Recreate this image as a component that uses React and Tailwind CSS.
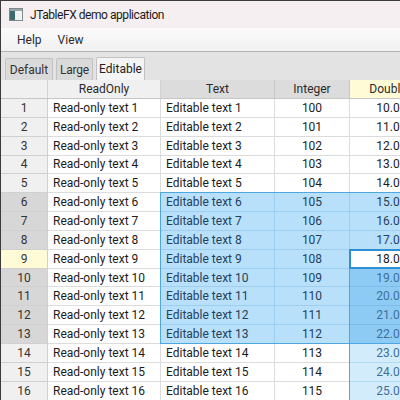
import React from "react";

const COLS = [
  { key: "ro", w: "w-[113px]" },
  { key: "tx", w: "w-[114px]" },
  { key: "in", w: "w-[75px]" },
  { key: "db", w: "w-[77px]" },
];

const rows = Array.from({ length: 16 }, (_, i) => i + 1);

function cellInfo(r, c) {
  const sel1 = r >= 6 && r <= 13 && c >= 1;
  const sel2 = r >= 10 && c === 3;
  const current = r === 9 && c === 3;
  return { sel1, sel2, current };
}

function Cell({ r, c, children, align }) {
  const { sel1, sel2, current } = cellInfo(r, c);
  let bg = "bg-white";
  let line = "border-[#dcdcdc]";
  let color = "text-[#1c1c1c]";
  if (current) {
    bg = "bg-white";
    line = "border-[#a9d5f2]";
    color = "text-[#1c1c1c]";
  } else if (sel1 && sel2) {
    bg = "bg-[#8ecbf4]";
    line = "border-[#7fbde9]";
    color = "text-[#3e6f98]";
  } else if (sel1) {
    bg = "bg-[#b8e0fa]";
    line = "border-[#9fcff0]";
    color = "text-[#23415e]";
  } else if (sel2) {
    bg = "bg-[#d3ecfc]";
    line = "border-[#b3daf3]";
    color = "text-[#3e6f98]";
  }
  const top1 = sel1 && r === 6;
  const left1 = sel1 && c === 1;
  const bottom1 = sel1 && r === 13;
  const left2 = sel2 && c === 3;
  return (
    <div
      className={`relative h-full shrink-0 border-r border-b ${line} ${bg} ${color} flex items-center ${
        align === "center" ? "justify-center" : "justify-start pl-[5px]"
      } ${COLS[c].w} whitespace-nowrap overflow-visible`}
    >
      {children}
      {(top1 || left1 || bottom1 || left2) && (
        <span
          className={`pointer-events-none absolute -top-px -left-px -right-px -bottom-px border-[#4ea7e2] ${
            top1 ? "border-t" : ""
          } ${left1 || left2 ? "border-l" : ""} ${bottom1 ? "border-b" : ""}`}
        />
      )}
      {current && (
        <span className="pointer-events-none absolute -top-px -left-px -right-[4px] -bottom-px border-2 border-[#2f8fd3]" />
      )}
    </div>
  );
}

function AppIcon() {
  return (
    <svg width="14" height="13" viewBox="0 0 14 13">
      <rect x="0.5" y="0.5" width="13" height="12" fill="#f3f3f3" stroke="#7d8a8c" />
      <rect x="1" y="3" width="5" height="9" fill="#3d6b6e" />
      <rect x="1" y="1" width="12" height="2" fill="#9aa7a8" />
    </svg>
  );
}

export default function App() {
  return (
    <div
      className="w-[400px] h-[400px] overflow-hidden bg-[#e3e3e3] border-l border-t border-[#3c3c3c] flex flex-col"
      style={{ fontFamily: 'Roboto, "Noto Sans", sans-serif' }}
    >
      {/* Title bar */}
      <div className="h-[27px] shrink-0 bg-[#f5eff1] flex items-center pl-[8px] gap-[7px]">
        <AppIcon />
        <span className="text-[12px] tracking-[-0.45px] text-[#1a1a1a]">JTableFX demo application</span>
      </div>
      {/* Menu bar */}
      <div className="h-[24px] shrink-0 bg-gradient-to-b from-[#fbfbfb] to-[#f1f1f1] border-b border-[#b3b3b3] flex items-center text-[12px] text-[#2a2a2a]">
        <span className="ml-[16px]">Help</span>
        <span className="ml-[16px]">View</span>
      </div>
      {/* Tabs */}
      <div className="h-[28px] shrink-0 bg-[#e3e3e3] flex items-end pl-[4px] gap-[3px] text-[12px] text-[#333]">
        <div className="w-[48px] h-[22px] flex items-center justify-center bg-[#dadada] border border-b-0 border-[#c2c2c2] rounded-t-[2px]">Default</div>
        <div className="w-[37px] h-[22px] flex items-center justify-center bg-[#dadada] border border-b-0 border-[#c2c2c2] rounded-t-[2px] tracking-[-0.2px]">Large</div>
        <div className="w-[49px] h-[23px] flex items-center justify-center bg-[#f4f4f4] border border-b-0 border-[#c2c2c2] rounded-t-[2px] text-[#222]">Editable</div>
      </div>
      {/* Table */}
      <div className="flex-1 bg-white flex flex-col text-[12px]">
        {/* Header */}
        <div className="h-[19px] shrink-0 flex text-[#2b2b2b] border-b border-[#c6c6c6]">
          <div className="w-[47px] shrink-0 bg-[#f0f0f0] border-r border-[#d2d2d2]" />
          <div className="w-[113px] shrink-0 bg-[#f0f0f0] border-r border-[#d2d2d2] flex items-center justify-center">ReadOnly</div>
          <div className="w-[114px] shrink-0 bg-[#dcdcdc] border-r border-[#c8c8c8] flex items-center justify-center">Text</div>
          <div className="w-[75px] shrink-0 bg-[#dcdcdc] border-r border-[#c8c8c8] flex items-center justify-center">Integer</div>
          <div className="w-[77px] shrink-0 bg-[#fffbd7] border-r border-[#c8c8c8] flex items-center justify-center whitespace-nowrap">Double</div>
        </div>
        {rows.map((r) => {
          const selRow = r >= 6 && r <= 13;
          const rh =
            r === 9
              ? "bg-[#fffbd7]"
              : selRow
              ? "bg-[#d7d7d7]"
              : "bg-[#f0f0f0]";
          return (
            <div key={r} className="h-[18.85px] shrink-0 flex">
              <div
                className={`w-[47px] shrink-0 h-full ${rh} border-r border-b border-[#d0d0d0] flex items-center justify-center text-[#333]`}
              >
                {r}
              </div>
              <Cell r={r} c={0}>Read-only text {r}</Cell>
              <Cell r={r} c={1}>Editable text {r}</Cell>
              <Cell r={r} c={2} align="center">{99 + r}</Cell>
              <Cell r={r} c={3} align="center">{(9 + r).toFixed(1)}</Cell>
            </div>
          );
        })}
      </div>
    </div>
  );
}
